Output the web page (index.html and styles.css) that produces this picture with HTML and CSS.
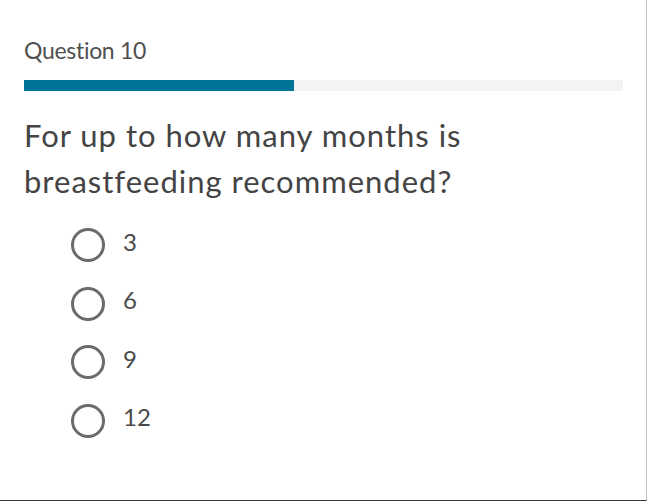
FILE: index.html
```html
<!DOCTYPE html>
<html lang="en">
<head>
<meta charset="utf-8">
<link rel="stylesheet" href="styles.css">
</head>
<body>
<div class="page">
  <div class="qnum">Question 10</div>
  <div class="progress"><div class="progress-fill" style="width:45%"></div></div>
  <div class="question">For up to how many months is breastfeeding recommended?</div>
  <ul class="options">
    <li class="option"><span class="radio"></span><span class="label">3</span></li>
    <li class="option"><span class="radio"></span><span class="label">6</span></li>
    <li class="option"><span class="radio"></span><span class="label">9</span></li>
    <li class="option"><span class="radio"></span><span class="label">12</span></li>
  </ul>
</div>
</body>
</html>
```

FILE: styles.css
```css
html, body {
  margin: 0;
  padding: 0;
  background: #fff;
}
.page {
  box-sizing: border-box;
  width: 647px;
  height: 501px;
  border-right: 1px solid #c4c4c4;
  border-bottom: 1px solid #3a3a3a;
  padding: 36px 24px 0 24px;
  font-family: Lato, "Open Sans", sans-serif;
  font-variant-ligatures: none;
  color: #4a4a4a;
  overflow: hidden;
}
.qnum {
  font-size: 23px;
  line-height: 28px;
  letter-spacing: -0.3px;
  color: #505050;
}
.progress {
  margin-top: 16px;
  width: 599px;
  height: 11px;
  background: #f3f3f3;
}
.progress-fill {
  height: 100%;
  background: #007398;
}
.question {
  margin-top: 21px;
  font-size: 31px;
  line-height: 46px;
  letter-spacing: 1px;
  width: 480px;
  color: #444;
}
.options {
  list-style: none;
  margin: 12px 0 0 0;
  padding: 0 0 0 47px;
}
.option {
  display: flex;
  align-items: center;
  height: 58.5px;
}
.radio {
  box-sizing: border-box;
  width: 34px;
  height: 34px;
  border: 3px solid #6b6b6b;
  border-radius: 50%;
  flex: none;
}
.label {
  margin-left: 18px;
  margin-bottom: 8px;
  font-size: 24px;
  color: #4a4a4a;
}
```
